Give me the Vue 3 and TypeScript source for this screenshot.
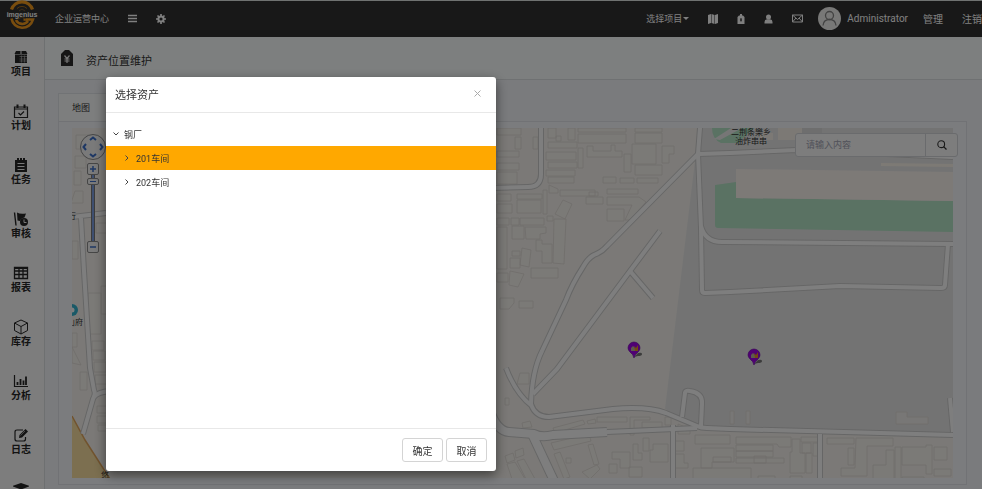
<script setup lang="ts">
import { ref } from 'vue'

interface MenuItem { label: string; icon: string }
interface TreeNode { id: number; label: string; level: number; open: boolean }

const menu: MenuItem[] = [
  { label: '项目', icon: 'project' },
  { label: '计划', icon: 'plan' },
  { label: '任务', icon: 'task' },
  { label: '审核', icon: 'audit' },
  { label: '报表', icon: 'report' },
  { label: '库存', icon: 'stock' },
  { label: '分析', icon: 'chart' },
  { label: '日志', icon: 'log' },
  { label: '', icon: 'train' },
]

const nodes: TreeNode[] = [
  { id: 1, label: '钢厂', level: 0, open: true },
  { id: 2, label: '201车间', level: 1, open: false },
  { id: 3, label: '202车间', level: 1, open: false },
]
const selected = ref(2)
const zoom = ref(95)
const keyword = ref('')

const roads = [
  'M700 120V127L698 153L701 227L702 289Q702 292 705 292L730 291L840 285L941 287Q945 287 945 284L948 243',
  'M698 153L730 152L797 149L953 156',
  'M701 225Q705 241 722 241L953 243',
  'M698 153L607 245Q602 251 594 254Q588 257 583 266Q572 283 566 299L542 350Q532 370 531 403Q535 416 549 416L613 408Q647 405 666 412L697 425Q701 427 707 427L730 428L953 434',
  'M660 230L630 270L557 368L533 393',
  'M630 270L653 297',
  'M506 367Q516 393 532 405',
  'M607 431L697 427',
  'M682 416L685 392Q685 389 690 390Q703 392 702 403L701 425',
  'M673 424V480', 'M820 433V480', 'M950 397L953 431',
  'M541 120V173Q541 186 528 186L490 187',
  'M72 216L106 212', 'M81 217L84 270L90 367L94 389Q96 393 93 398L83 433', 'M94 396Q98 391 110 390',
]
const wideRoads = ['M490 410Q497 430 509 431L534 433Q542 437 553 434L607 431', 'M532 433L555 482']

const buildings =
  'M497 127h24v7h-24zM515 136h6v12h-6zM533 136h5v12h-5zM497 150h22v6h-22zM497 162h22v7h-22zM497 171h20v12h-20z' +
  'M548 127h8v10h-8zM556 135h5v5h-5zM568 127h7v12h-7zM548 141h29v6h-29zM546 151h30v8h-30zM548 161h29v6h-29zM546 169h29v6h-29zM548 176h26v6h-26zM578 147h5v20h-5z' +
  'M578 127h48v4h-48zM578 133h48v9h-48zM587 145h6v5h18v-6h4v6h7v6h-35zM635 127h27v4h-27zM635 132h27v10h-27zM632 143h24v20h-24zM635 164h27v10h-27zM624 153h7v18h-7zM662 145h12v8h-5v9h-7z' +
  'M603 176h13v6h-13zM620 177h14v5h-14zM637 177h21v5h-21zM607 188h31v5h-31zM607 196h32l7 5-16 18h-5l7-15h-25zM607 208h17v12h-17z' +
  'M560 189h35v6h-35zM589 191h9v4h-9zM586 196h17v7h-17zM549 184l9 4v4h-9zM563 199l9 4-7 15-10-5zM497 193h14v7h-14zM517 193h25v5h-25zM517 199h24v13h-24zM497 203h15v9h-15zM543 189h4v24h-4zM520 217h24v7h-24zM547 215h6v5h-6z' +
  'M554 218h12l-2 45-11-1zM497 217h12v7h-12zM511 217h8v7h-8zM512 225h12v13h-12zM525 226h21v6l-6 1v5h-14zM497 226h10v42h-10zM536 239h6v4h10v19h-10v-12h-6zM522 247l9 2-2 17-9-2zM512 250h8v5h-8zM510 257h10v10h-10zM531 267h27v10h-27zM510 270l14 3-6 13-9-2zM497 272h11v9h-11zM500 297h14v5l-5 6h-9zM519 300h14v7h-14z' +
  'M520 372h9v11h-12zM505 397h4v7h-4zM522 422l8-2 2 6-9 1zM553 427l30-8 2 4-30 9zM587 420l8-2 1 4-8 1zM597 416h30v5h-30zM630 416h20v3h-16v15h-4zM642 421h20v6h-20zM665 416h6v8h-6zM678 423l12 5v5h-12z' +
  'M551 442l38-9 2 7-37 9zM554 453l6-2 10 25-6 2zM566 457h5v5h-5zM588 444l5-1 6 20-5 1zM505 455l8-3 2 7-8 3zM515 450l8-3 1 7-8 3zM507 463l8-2 10 17h-13zM517 460l7-2 11 20h-9zM582 471l15-7 3 4-10 10zM612 451h18v16h-10v-9h-8zM633 443h5v9h4v7h-9zM643 437h6v13h-6zM629 466h13v10h-13zM609 463h8v9h-8zM653 443h15v18h-18v-12h3zM675 440h9v10h-9zM675 453h9v9h4v5h-13z' +
  'M695 434h35v9h-35zM701 447h33v14h-22v6h-11zM713 456h18v5h-18zM693 467h58v12h-58zM730 410h4v13h-4zM746 410h4v13h-4z' +
  'M736 436h55v10h-12l-2-3h-41zM736 444h37v6h-37zM736 450h37v6h-37zM736 457h48v5h-48zM754 455h12v7h-12zM758 475h17v4h-17zM792 438h8v14h5v20h-15v-21h2zM801 436h19v5h-19zM802 442h9v10h-9zM806 452h6v20h-6zM813 442h7v13h-7zM790 475h12v3h-12z' +
  'M827 437h27v6h-27zM856 437h37v8h-26v30h-26v-8h14zM848 447h6v17h-6zM873 464h13v-15h8v29h-21zM895 446h6v33h-6zM902 446h24v-2h6v29h-6v-9h-24zM934 446h13v13h-13zM934 468h17v7h-17zM902 476h22v3h-22zM896 411h11v5h21v7h-32z' +
  'M76 134h12v14h-12zM75 155h11v12h-11zM74 170h7v14h-7zM75 190h8v12h-12zM96 222h12v10h-12zM72 240h6v18h-6zM88 292h13v41h-13zM101 285h6v28h-6zM72 346l9 18-9-2zM92 340h12v9h-12zM93 350h12v9h-12zM94 361h12v10h-12zM95 374h12v9h-12zM80 371h7v18h-7zM97 405h12v7h-12zM97 415h12v7h-12zM98 424h9v6h-9zM72 332h5v14h-5z'
</script>

<template>
  <div class="page">
    <header class="topbar">
      <a class="logo" href="#" aria-label="imgenius">
        <svg width="32" height="32" viewBox="0 0 32 32">
          <path d="M5.500 9.500A11 11 0 0 1 26.500 9.500" fill="none" stroke="#f39a1c" stroke-width="3.200" />
          <path d="M11 8.500A7 7 0 0 1 21 8.500" fill="none" stroke="#a56b1b" stroke-width="1" />
          <path d="M5.500 18.500A11 11 0 0 0 27 19.500H17.500M22 21A7 7 0 0 1 10 20" fill="none" stroke="#f39a1c" stroke-width="2.600" />
          <path d="M13 11L16 9L19 11M12 19L16 17L20 19" fill="none" stroke="#7a5a30" />
          <text x="16" y="16.500" text-anchor="middle" class="logo-text">imgenius</text>
        </svg>
      </a>
      <a class="brand" href="#">企业运营中心</a>
      <button class="bar-btn menu-btn" aria-label="菜单">
        <svg width="9" height="9" viewBox="0 0 9 9"><path d="M0 1.500H9M0 4.500H9M0 7.500H9" stroke="currentColor" stroke-width="1.500" /></svg>
      </button>
      <button class="bar-btn" aria-label="设置">
        <svg width="10" height="10" viewBox="0 0 10 10"><circle cx="5" cy="5" r="2.600" fill="none" stroke="currentColor" stroke-width="2" /><path d="M5 0V2M5 8V10M0 5H2M8 5H10M1.500 1.500L3 3M7 7L8.500 8.500M8.500 1.500L7 3M3 7L1.500 8.500" stroke="currentColor" stroke-width="1.700" /></svg>
      </button>
      <nav class="bar-right">
        <button class="bar-btn project">选择项目<i class="caret"></i></button>
        <button class="bar-btn" aria-label="地图"><svg width="10" height="10" viewBox="0 0 10 10"><path d="M0 1L3 0V9L0 10ZM3.500 0L6.500 1V10L3.500 9ZM7 1L10 0V9L7 10Z" fill="currentColor" /></svg></button>
        <button class="bar-btn" aria-label="资产"><svg width="8" height="10" viewBox="0 0 8 10"><path fill-rule="evenodd" d="M3 0H5V1.500H6L7.500 3V10H.5V3L2 1.500H3ZM3.500 4V5.500H3V6.500H3.500V7.500H4.500V6.500H5V5.500H4.500V4Z" fill="currentColor" /></svg></button>
        <button class="bar-btn" aria-label="用户"><svg width="9" height="10" viewBox="0 0 9 10"><circle cx="4.500" cy="3" r="2.500" fill="currentColor" /><path d="M.5 9.500V8Q.5 5.500 3 5.300H6Q8.500 5.500 8.500 8V9.500Z" fill="currentColor" /></svg></button>
        <button class="bar-btn" aria-label="邮件"><svg width="11" height="9" viewBox="0 0 11 9"><path d="M.5 1H10.500V8H.5ZM.5 1L5.500 5.500L10.500 1M.5 8L4 4M10.500 8L7 4" fill="none" stroke="currentColor" /></svg></button>
        <a class="account" href="#">
          <svg width="23" height="23" viewBox="0 0 23 23"><circle cx="11.500" cy="11.500" r="11.500" fill="#f0f0ee" /><circle cx="11.500" cy="8.500" r="4" fill="none" stroke="#858585" stroke-width="1.300" /><path d="M5 18.500Q5.500 12.500 11.500 12.500T18 18.500" fill="none" stroke="#858585" stroke-width="1.300" /></svg>
          <span>Administrator</span>
        </a>
        <a class="bar-link" href="#">管理</a>
        <a class="bar-link" href="#">注销</a>
      </nav>
    </header>

    <div class="main">
      <aside class="sidebar">
        <a v-for="item in menu" :key="item.icon" class="side-item" href="#">
          <svg width="16" height="16" viewBox="0 0 16 16" fill="none" stroke="currentColor">
            <g v-if="item.icon === 'project'" stroke="none" fill="currentColor"><path d="M3 2H7.500V5H1.500ZM8.500 2H13L14.500 5H8.500ZM2 5.500H14V14H2Z" /><path d="M6.500 7.500H14M6.500 10H14M6.500 12H14M8.500 6.500V13.500M11.500 6.500V13.500" stroke="#aaa" stroke-width=".7" /></g>
            <g v-else-if="item.icon === 'plan'" stroke-width="1.200"><path d="M1.500 4H14.500V14.500H1.500ZM1.500 6H14.500M5.500 10L7.500 12L11 8.500" /><path d="M4.500 1.500V5M11.500 1.500V5" stroke-width="2" /></g>
            <g v-else-if="item.icon === 'task'"><path d="M2 3H14V15H2ZM4 1H6V3H4ZM7 1H9V3H7ZM10 1H12V3H10Z" fill="currentColor" stroke="none" /><path d="M4.500 6.500H11.500M4.500 9.500H11.500M4.500 12.500H11.500" stroke="#eee" stroke-width="1.200" /></g>
            <g v-else-if="item.icon === 'audit'"><path d="M1.500 1.500L3 14.500" stroke-width="1.400" /><path d="M4 1.500Q7 3.500 13 2.500L11.500 6.500Q8 7 7 10L4.500 9.500Z" fill="currentColor" stroke="none" /><circle cx="11" cy="11" r="4" fill="currentColor" stroke="none" /><path d="M11 8.500V11.500H13.500" stroke="#eee" /></g>
            <g v-else-if="item.icon === 'report'" stroke-width="1.300"><path d="M1.500 2.500H14.500V13.500H1.500ZM1.500 6H14.500M1.500 9.500H14.500M6 2.500V13.500M10 2.500V13.500" /><path d="M1.500 3H14.500" stroke-width="2" /></g>
            <g v-else-if="item.icon === 'stock'"><path d="M8 1L14.500 4V11.500L8 15L1.500 11.500V4ZM1.500 4L8 7.500L14.500 4M8 7.500V15" /></g>
            <g v-else-if="item.icon === 'chart'"><path d="M1.500 2V13.500H15" stroke-width="1.200" /><path d="M4.500 12V9M7.500 12V6M10.500 12V7.500M13 12V3.500" stroke-width="1.800" /></g>
            <g v-else-if="item.icon === 'log'"><path d="M10 3H4Q2 3 2 5V12Q2 14 4 14H10.500Q12.500 14 12.500 12V10" stroke-width="1.200" /><path d="M6 11L6.500 8L12.500 2L15 4.500L9 10.500Z" fill="currentColor" stroke="none" /><path d="M7.500 8.500L12 4" stroke="#bbb" stroke-width=".7" /></g>
            <path v-else d="M-1 5L8 2L17 5L8 8.500ZM4 8V12Q8 14 12 12V8L8 10Z" fill="currentColor" stroke="none" />
          </svg>
          <span>{{ item.label }}</span>
        </a>
      </aside>

      <section class="content">
        <div class="page-head">
          <svg width="12" height="16" viewBox="0 0 12 16"><path d="M4 0H8L12 4V16H0V4Z" fill="#2c2c2c" /><path d="M3.500 5.500L6 8.500L8.500 5.500M6 8.500V13M3.500 9H8.500M3.500 11H8.500" fill="none" stroke="#eee" stroke-width="1.200" /></svg>
          <h1>资产位置维护</h1>
        </div>
        <div class="workspace">
          <button class="tab">地图</button>
          <div class="panel">
            <div class="map">
              <svg class="map-canvas" viewBox="72 127 881 351" preserveAspectRatio="xMinYMin slice">
                <path d="M72 127H953V478H72Z" fill="#f6f3ee" />
                <path d="M700 127H953V434L703 427L665 408L695 160Z" fill="#e7e7e7" />
                <path d="M715 184L736 181V197L953 200V231L718 227Q715 227 715 224Z" fill="#b4e4c6" />
                <path d="M736 168L953 171V200L736 197Z" fill="#fbf4ef" />
                <path d="M881 162L953 163V166L881 165Z" fill="#fbf4ea" />
                <path d="M712 127H754L738 142H721Q712 138 712 127Z" fill="#b4e4c6" />
                <path d="M714 138L731 127H742L720 139Z" fill="#ededed" />
                <path d="M778 127H802V139H778ZM760 132H773V139H760Z" fill="#f8f3ea" />
                <path d="M802 127H822V139H802Z" fill="#dcdcdc" />
                <path d="M72 415L84 438L106 472L110 478H72Z" fill="#f8dfa0" />
                <path d="M72 415L85 439L110 478" fill="none" stroke="#e3a65c" stroke-width="1.500" />
                <path :d="buildings" fill="#f8f5f0" fill-opacity=".6" stroke="#dfdbd5" stroke-width=".8" />
                <g fill="none" stroke-linejoin="round">
                  <path v-for="d in roads" :key="'c' + d" :d="d" stroke="#cdcdcd" stroke-width="6" />
                  <path v-for="d in wideRoads" :key="'c' + d" :d="d" stroke="#cdcdcd" stroke-width="10" />
                  <path v-for="d in roads" :key="d" :d="d" stroke="#fdfdfd" stroke-width="4" />
                  <path v-for="d in wideRoads" :key="d" :d="d" stroke="#fdfdfd" stroke-width="8" />
                </g>
                <circle cx="72" cy="309" r="6" fill="#34b3cf" />
                <circle cx="72" cy="309" r="2.500" fill="#fff" />
                <g class="map-label">
                  <text x="731" y="134">二荆条樂乡</text>
                  <text x="735" y="143">油炸串串</text>
                  <text x="67" y="324">山府</text>
                  <text x="68" y="218">行</text>
                  <text x="101" y="477">悠</text>
                </g>
                <g v-for="p in [[634, 347], [754, 354]]" :key="p[0]" :transform="`translate(${p[0]} ${p[1]})`">
                  <path d="M0 9L4 5Q8 4 8 6T4 8Z" fill="#777" />
                  <path d="M0 10Q-1 6-4 4Q-6 2-6 0A6 6 0 0 1 6 0Q6 2 4 4Q1 6 0 10Z" fill="#a000e8" stroke="#6a00a8" stroke-width=".6" />
                  <path d="M-3 3V0L-1-2L1 0V3Z" fill="#bdb1a0" />
                  <path d="M0-2L2 0L4-3V3H1Z" fill="#e69324" />
                </g>
              </svg>
              <div class="map-control">
                <svg width="26" height="26" viewBox="0 0 26 26"><circle cx="13" cy="13" r="12.500" fill="#f4f4f4" stroke="#8c8c8c" /><path d="M10 6L13 3.500L16 6M10 20L13 22.500L16 20M6 10L3.500 13L6 16M20 10L22.500 13L20 16" fill="none" stroke="#3c6fc8" stroke-width="2" /></svg>
                <button class="zoom-btn" aria-label="放大"><svg width="8" height="8" viewBox="0 0 8 8"><path d="M1 4H7M4 1V7" stroke="#3c6fc8" stroke-width="1.500" /></svg></button>
                <input v-model="zoom" class="zoom-range" type="range" min="0" max="100" aria-label="缩放级别">
                <button class="zoom-btn" aria-label="缩小"><svg width="8" height="8" viewBox="0 0 8 8"><path d="M1 4H7" stroke="#3c6fc8" stroke-width="1.500" /></svg></button>
              </div>
            </div>
            <form class="search" @submit.prevent>
              <input v-model="keyword" type="text" placeholder="请输入内容" aria-label="搜索内容">
              <button aria-label="搜索"><svg width="10" height="10" viewBox="0 0 10 10"><circle cx="4.200" cy="4.200" r="3.400" fill="none" stroke="#333" stroke-width="1.100" /><path d="M6.600 6.600L9.500 9.500" stroke="#333" stroke-width="1.300" /></svg></button>
            </form>
          </div>
        </div>
      </section>
    </div>

    <div class="backdrop">
      <div class="dialog" role="dialog" aria-labelledby="dialog-title">
        <div class="dialog-head">
          <h2 id="dialog-title">选择资产</h2>
          <button class="close" aria-label="关闭"><svg width="7" height="7" viewBox="0 0 7 7"><path d="M.5 .5L6.500 6.500M6.500 .5L.5 6.500" stroke="#aaa" /></svg></button>
        </div>
        <ul class="tree" role="tree">
          <li v-for="node in nodes" :key="node.id" role="treeitem" class="node" :class="{ child: node.level === 1, selected: selected === node.id }" @click="selected = node.id">
            <svg width="6" height="6" viewBox="0 0 6 6"><path :d="node.open ? 'M.5 1.500L3 4L5.500 1.500' : 'M1.500 .5L4 3L1.500 5.500'" fill="none" stroke="#444" /></svg>
            <span>{{ node.label }}</span>
          </li>
        </ul>
        <div class="dialog-foot">
          <button>确定</button>
          <button>取消</button>
        </div>
      </div>
    </div>
  </div>
</template>

<style>
body { overflow: hidden; }
</style>

<style scoped>
.page { height: 100vh; display: flex; flex-direction: column; font-family: Roboto, "Noto Sans CJK SC", sans-serif; font-size: 9px; color: #333; background: #f4f6fa; }
* { box-sizing: border-box; }
a { color: inherit; text-decoration: none; }
button { font: inherit; color: inherit; border: 0; padding: 0; background: none; cursor: pointer; }
svg { display: block; flex: none; }
.topbar { height: 37px; flex: none; display: flex; align-items: center; padding-bottom: 1px; background: #303030; border-top: 1px solid #dfe4e2; color: #fff; }
.logo { margin: 0 17px 5px 6px; }
.logo-text { font: bold 7px "Liberation Sans", sans-serif; fill: #fff; }
.bar-btn { display: flex; align-items: center; }
.menu-btn { margin: 0 19px; }
.bar-right { margin-left: auto; display: flex; align-items: center; gap: 19px; white-space: nowrap; }
.caret { border: 3px solid transparent; border-top-color: currentColor; border-bottom: 0; margin-left: 1px; }
.account { display: flex; align-items: center; gap: 6px; font-size: 10px; margin: 0 -4px; }
.bar-link { font-size: 10px; }
.main { flex: 1; min-height: 0; display: flex; }
.sidebar { width: 45px; flex: none; overflow: hidden; background: #fafafa; border-right: 1px solid #dde0e2; padding-top: 12px; }
.side-item { height: 54px; display: flex; flex-direction: column; align-items: center; font-size: 10px; font-weight: 700; line-height: 13px; color: #262626; padding-right: 2px; }
.content { flex: 1; min-width: 0; display: flex; flex-direction: column; }
.page-head { height: 43px; flex: none; display: flex; align-items: center; gap: 13px; padding: 0 16px; background: #fbfffe; border-bottom: 1px solid #dfe3e5; }
h1, h2 { margin: 0; font-size: 11px; font-weight: 400; }
.page-head h1 { padding-top: 4px; }
.workspace { flex: 1; min-height: 0; display: flex; flex-direction: column; padding: 13px 15px 4px 13px; }
.tab { align-self: flex-start; width: 60px; height: 28px; padding-right: 14px; background: #fbfcfd; border: 1px solid #e3e6ea; border-bottom: 0; }
.panel { flex: 1; min-height: 0; position: relative; padding: 6px 13px; border: 1px solid #e2e5ea; background: #f6f9fd; }
.map { height: 100%; position: relative; overflow: hidden; }
.map-canvas { width: 100%; height: 100%; }
.map-label { font-size: 8px; fill: #333; }
.map-control { position: absolute; left: 8px; top: 6px; display: flex; flex-direction: column; align-items: center; }
.zoom-btn { width: 12px; height: 12px; display: grid; place-items: center; border: 1px solid #8c8c8c; border-radius: 2px; background: #f4f4f4; }
.map-control > svg { margin-bottom: 3px; }
.zoom-range { appearance: none; writing-mode: vertical-lr; direction: rtl; width: 12px; height: 66px; margin: 0; background: none; }
.zoom-range::-webkit-slider-runnable-track { width: 4px; background: #7d9ee0; border: solid #777; border-width: 0 1px; }
.zoom-range::-webkit-slider-thumb { appearance: none; width: 12px; height: 7px; margin-left: -5px; border: 1px solid #8c8c8c; border-radius: 2px; background: linear-gradient(#3c6fc8, #3c6fc8) center / 6px 1px no-repeat #f4f4f4; }
.search { position: absolute; top: 11px; right: 8px; width: 163px; height: 24px; display: flex; border: 1px solid #d4d6da; border-radius: 3px; background: #fafafa; }
.search input { flex: 1; min-width: 0; border: 0; padding: 0 10px; font: inherit; background: none; outline: 0; }
.search input::placeholder { color: #a2a4b4; }
.search button { width: 32px; display: grid; place-items: center; border-left: 1px solid #d4d6da; }
.backdrop { position: fixed; inset: 0; background: rgba(0, 0, 0, .5); }
.dialog { width: 390px; margin: 77px 0 0 106px; background: #fff; border-radius: 3px; box-shadow: 0 4px 12px rgba(0, 0, 0, .5); }
.dialog-head { height: 36px; display: flex; align-items: center; justify-content: space-between; padding: 0 15px 2px 9px; border-bottom: 1px solid #e8e8e8; }
.tree { min-height: 315px; margin: 0; padding: 9px 0; list-style: none; }
.node { height: 24px; display: flex; align-items: center; gap: 5px; padding-left: 7px; }
.child { padding-left: 18px; gap: 6px; }
.selected { background: #ffa800; }
.dialog-foot { display: flex; justify-content: flex-end; gap: 3px; padding: 9px; border-top: 1px solid #e8e8e8; }
.dialog-foot button { width: 41px; height: 24px; font-size: 10px; border: 1px solid #d4d4d4; border-radius: 3px; background: #fff; }
</style>
